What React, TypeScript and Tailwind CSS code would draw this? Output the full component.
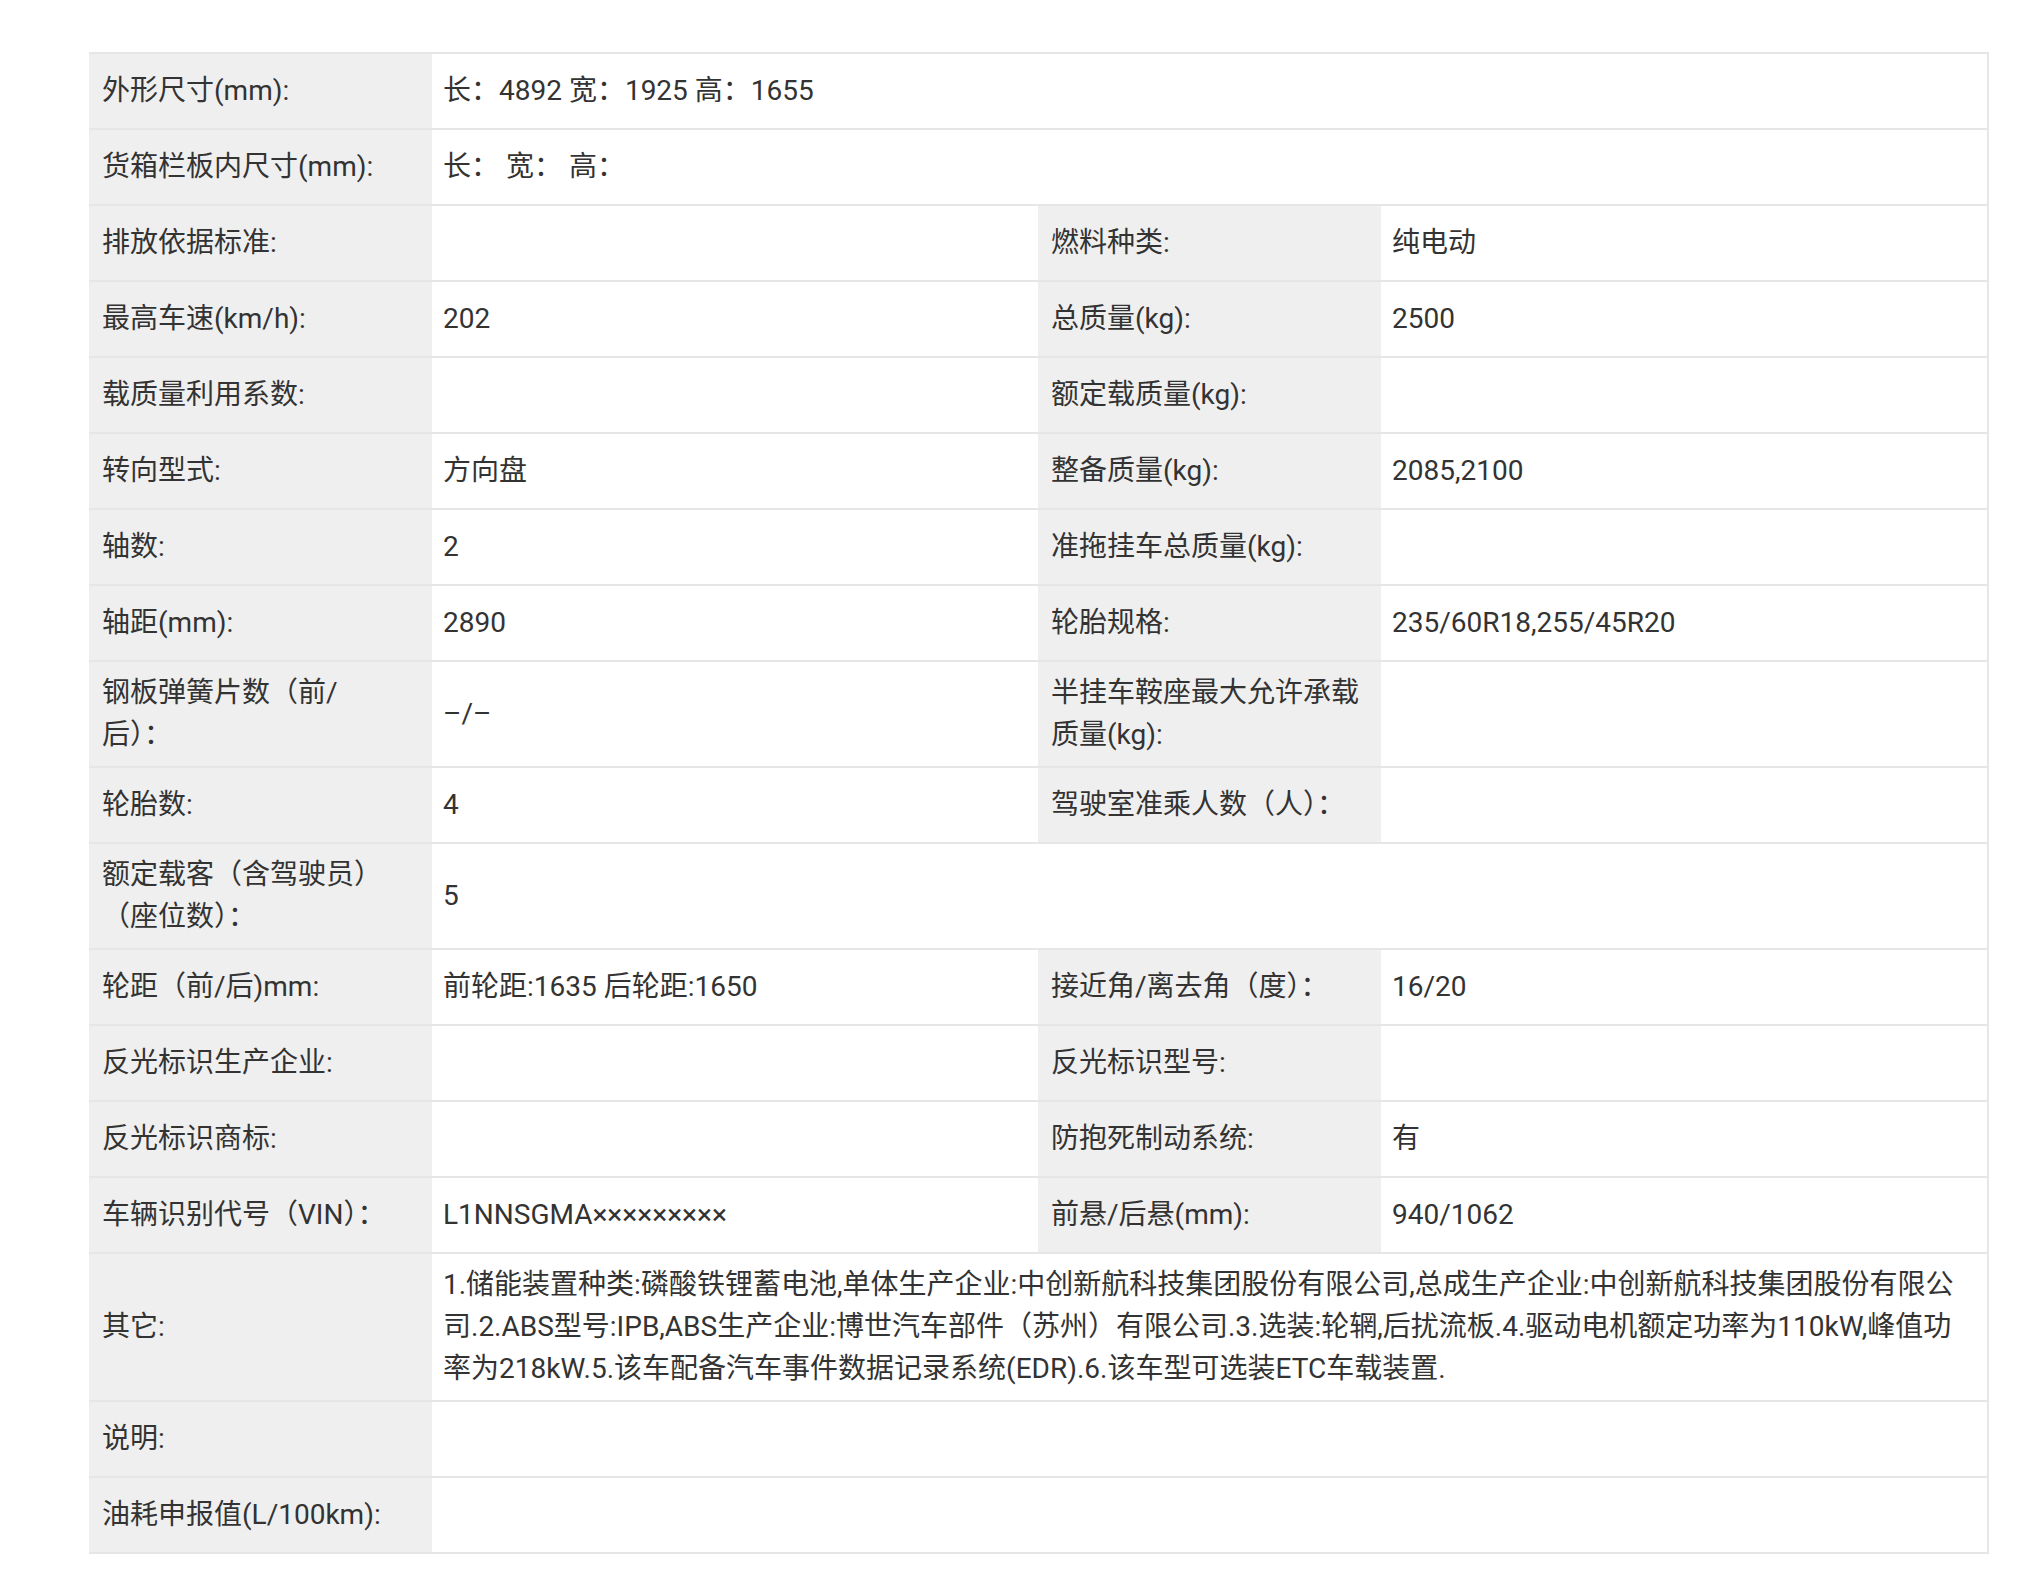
type Cell = { label: string; value?: string };
type Row = { cells: Cell[]; full?: boolean; lines?: string[] };

const rows: Row[] = [
  { cells: [{ label: "外形尺寸(mm):", value: "长：4892 宽：1925 高：1655" }], full: true },
  { cells: [{ label: "货箱栏板内尺寸(mm):", value: "长： 宽： 高：" }], full: true },
  { cells: [{ label: "排放依据标准:" }, { label: "燃料种类:", value: "纯电动" }] },
  { cells: [{ label: "最高车速(km/h):", value: "202" }, { label: "总质量(kg):", value: "2500" }] },
  { cells: [{ label: "载质量利用系数:" }, { label: "额定载质量(kg):" }] },
  { cells: [{ label: "转向型式:", value: "方向盘" }, { label: "整备质量(kg):", value: "2085,2100" }] },
  { cells: [{ label: "轴数:", value: "2" }, { label: "准拖挂车总质量(kg):" }] },
  { cells: [{ label: "轴距(mm):", value: "2890" }, { label: "轮胎规格:", value: "235/60R18,255/45R20" }] },
  { cells: [{ label: "钢板弹簧片数（前/\n后）：", value: "–/–" }, { label: "半挂车鞍座最大允许承载\n质量(kg):" }] },
  { cells: [{ label: "轮胎数:", value: "4" }, { label: "驾驶室准乘人数（人）：" }] },
  { cells: [{ label: "额定载客（含驾驶员）\n（座位数）：", value: "5" }], full: true },
  { cells: [{ label: "轮距（前/后)mm:", value: "前轮距:1635 后轮距:1650" }, { label: "接近角/离去角（度）：", value: "16/20" }] },
  { cells: [{ label: "反光标识生产企业:" }, { label: "反光标识型号:" }] },
  { cells: [{ label: "反光标识商标:" }, { label: "防抱死制动系统:", value: "有" }] },
  { cells: [{ label: "车辆识别代号（VIN）：", value: "L1NNSGMA×××××××××" }, { label: "前悬/后悬(mm):", value: "940/1062" }] },
  {
    cells: [{ label: "其它:" }],
    full: true,
    lines: [
      "1.储能装置种类:磷酸铁锂蓄电池,单体生产企业:中创新航科技集团股份有限公司,总成生产企业:中创新航科技集团股份有限公",
      "司.2.ABS型号:IPB,ABS生产企业:博世汽车部件（苏州）有限公司.3.选装:轮辋,后扰流板.4.驱动电机额定功率为110kW,峰值功",
      "率为218kW.5.该车配备汽车事件数据记录系统(EDR).6.该车型可选装ETC车载装置.",
    ],
  },
  { cells: [{ label: "说明:" }], full: true },
  { cells: [{ label: "油耗申报值(L/100km):" }], full: true },
];

function Label({ text }: { text: string }) {
  return (
    <div className="flex min-h-[74px] items-center bg-[#efefef] py-[10px] pl-[13px] pr-[16px]">
      <span className="whitespace-pre-line">{text}</span>
    </div>
  );
}

export default function App() {
  return (
    <div className="min-h-screen bg-white pt-[52px] pl-[89px] font-[Roboto,'Noto_Sans_CJK_SC',sans-serif] text-[28px] leading-[42px] text-[#333]">
      <div className="w-[1900px] border-t-2 border-r-2 border-[#e6e6e6]">
        {rows.map((row, i) => (
          <div
            key={i}
            className="grid grid-cols-[343px_606px_343px_606px] border-b-2 border-[#e6e6e6]"
          >
            {row.cells.map((cell) => (
              <div
                key={cell.label}
                className={row.full ? "col-span-4 grid grid-cols-[343px_1fr]" : "col-span-2 grid grid-cols-[343px_1fr]"}
              >
                <Label text={cell.label} />
                <div className="flex min-h-[74px] items-center bg-white py-[10px] pl-[11px] pr-[12px]">
                  {row.lines ? (
                    <div>
                      {row.lines.map((line) => (
                        <div key={line} className="whitespace-nowrap">
                          {line}
                        </div>
                      ))}
                    </div>
                  ) : (
                    <span className="whitespace-pre">{cell.value ?? ""}</span>
                  )}
                </div>
              </div>
            ))}
          </div>
        ))}
      </div>
    </div>
  );
}
